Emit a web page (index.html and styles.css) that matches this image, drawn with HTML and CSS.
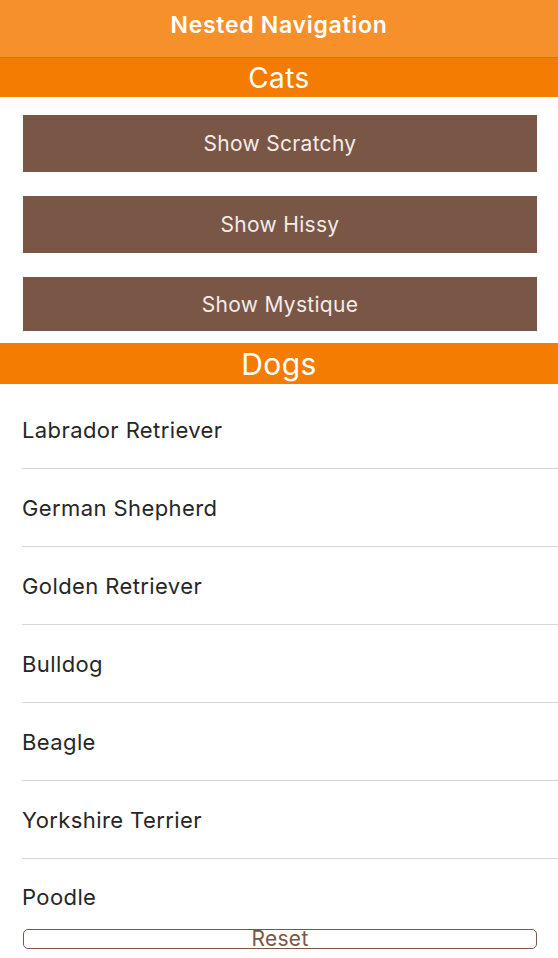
FILE: index.html
```html
<!DOCTYPE html>
<html lang="en">
<head>
    <meta charset="UTF-8">
    <meta name="viewport" content="width=device-width, initial-scale=1.0">
    <title>Nested Navigation</title>
    <link rel="stylesheet" href="styles.css">
</head>
<body>
    <div class="nav-bar">Nested Navigation</div>

    <div class="section-title">Cats</div>
    <div class="cats">
        <button class="cat-button">Show Scratchy</button>
        <button class="cat-button">Show Hissy</button>
        <button class="cat-button short">Show Mystique</button>
    </div>

    <div class="section-title dogs-title">Dogs</div>
    <ul class="dog-list">
        <li>Labrador Retriever</li>
        <li>German Shepherd</li>
        <li>Golden Retriever</li>
        <li>Bulldog</li>
        <li>Beagle</li>
        <li>Yorkshire Terrier</li>
        <li>Poodle</li>
    </ul>

    <div class="reset-wrap">
        <button class="reset-button">Reset</button>
    </div>
</body>
</html>
```

FILE: styles.css
```css
body {
    font-family: Inter, Roboto, sans-serif;
    margin: 0;
    padding: 0;
    background-color: #fff;
    height: 958px;
    overflow: hidden;
}

.nav-bar {
    height: 49px;
    padding-bottom: 8px;
    background-color: #f6902a;
    border-bottom: 1px solid #d46f12;
    color: #fff;
    font-size: 23px;
    font-weight: 600;
    letter-spacing: 0.7px;
    display: flex;
    justify-content: center;
    align-items: center;
}

.section-title {
    height: 39px;
    background-color: #f57c02;
    color: #fff;
    font-size: 28px;
    letter-spacing: 0.4px;
    display: flex;
    justify-content: center;
    align-items: center;
}

.dogs-title {
    height: 41px;
    font-size: 30px;
}

.cats {
    display: flex;
    flex-direction: column;
    gap: 24px;
    padding: 18px 21px 12px 23px;
}

.cat-button {
    height: 57px;
    background-color: #7a5647;
    color: #f3ece8;
    border: none;
    font-family: inherit;
    font-size: 21px;
    letter-spacing: 0.3px;
    cursor: pointer;
}

.cat-button.short {
    height: 54px;
}

.dog-list {
    list-style: none;
    margin: 0;
    padding: 7px 0 0 22px;
}

.dog-list li {
    height: 77px;
    border-bottom: 1px solid #d6d6d8;
    display: flex;
    align-items: center;
    font-size: 22px;
    letter-spacing: 0.4px;
    color: #262626;
}

.dog-list li:last-child {
    height: 64px;
    padding-top: 6px;
    border-bottom: none;
}

.reset-wrap {
    padding: 0 21px 0 23px;
}

.reset-button {
    width: 100%;
    height: 20px;
    border: 1px solid #7a5647;
    border-radius: 5px;
    background-color: #fff;
    color: #7a5647;
    font-family: inherit;
    font-size: 21px;
    letter-spacing: 0.3px;
    line-height: 17px;
    padding: 0;
    display: flex;
    justify-content: center;
    align-items: flex-start;
}
```
